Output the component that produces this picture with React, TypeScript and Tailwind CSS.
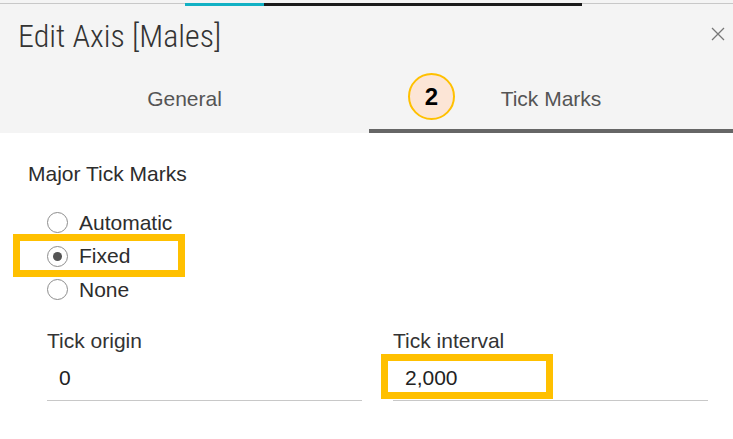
import React from 'react';

const RadioRow: React.FC<{ label: string; checked?: boolean }> = ({ label, checked }) => (
  <div className="h-[33.5px] flex items-center gap-[11px]">
    <span className="w-[21px] h-[21px] rounded-full border-[1.5px] border-[#8d8d8d] bg-white flex items-center justify-center">
      {checked && <span className="w-[9px] h-[9px] rounded-full bg-[#555]" />}
    </span>
    <span className="text-[21px] leading-[24px] text-[#2d2d2d]">{label}</span>
  </div>
);

const Field: React.FC<{ label: string; value: string }> = ({ label, value }) => (
  <div className="w-[315px] flex flex-col">
    <span className="text-[21px] leading-[24px] text-[#333]">{label}</span>
    <div className="mt-[13px] pl-[12px] pb-[8px] border-b border-[#c8c8c8]">
      <span className="text-[21px] leading-[24px] text-[#222]">{value}</span>
    </div>
  </div>
);

export default function App() {
  return (
    <div className="relative w-[733px] h-[439px] bg-white overflow-hidden font-['Liberation_Sans',Arial,sans-serif]">
      {/* HEADER */}
      <div className="bg-[#f4f4f4] h-[133px] flex flex-col">
        <div className="h-[6px] flex items-start pt-[3px]">
          <div className="w-[185px] h-px bg-[#c8c8c8]" />
          <div className="w-[79px] h-[2.5px] bg-[#12b1c4]" />
          <div className="w-[318px] h-[2.5px] bg-[#1b1b1b]" />
          <div className="flex-1 h-px bg-[#c8c8c8]" />
        </div>
        <div className="mt-[12px] h-[36px] flex items-center justify-between pl-[18px] pr-[8px]">
          <span className="font-['Liberation_Sans_Narrow','Roboto_Condensed','DejaVu_Sans_Condensed',Roboto,sans-serif] font-light text-[32px] leading-[36px] text-[#333]">
            Edit Axis [Males]
          </span>
          <svg width="14" height="14" viewBox="0 0 14 14" className="-mt-[4px]">
            <path d="M1 1 L13 13 M13 1 L1 13" stroke="#777" strokeWidth="1.3" fill="none" />
          </svg>
        </div>
        <div className="h-[79px] flex">
          <div className="w-[369px] flex items-end justify-center pb-[18px] border-b-4 border-transparent">
            <span className="text-[21px] leading-[24px] text-[#555]">General</span>
          </div>
          <div className="flex-1 flex items-end justify-center pb-[18px] border-b-4 border-[#666]">
            <span className="text-[21px] leading-[24px] text-[#555]">Tick Marks</span>
          </div>
        </div>
      </div>

      {/* CONTENT */}
      <div className="flex flex-col">
        <div className="mt-[29px] pl-[28px] text-[21px] leading-[24px] text-[#2d2d2d]">Major Tick Marks</div>
        <div className="mt-[20px] pl-[47px] flex flex-col">
          <RadioRow label="Automatic" />
          <RadioRow label="Fixed" checked />
          <RadioRow label="None" />
        </div>
        <div className="mt-[22px] pl-[47px] flex gap-[31px]">
          <Field label="Tick origin" value="0" />
          <Field label="Tick interval" value="2,000" />
        </div>
      </div>

      {/* ANNOTATIONS */}
      <div className="absolute left-[408px] top-[73px] w-[47px] h-[47px] rounded-full bg-[#fce5d6] border-2 border-[#ffc000] flex items-center justify-center">
        <span className="font-bold text-[24px] leading-none text-black">2</span>
      </div>
      <div className="absolute left-[13px] top-[234px] w-[172px] h-[43px] border-[7px] border-[#ffc000]" />
      <div className="absolute left-[381px] top-[354px] w-[172px] h-[45px] border-[7px] border-[#ffc000]" />
    </div>
  );
}
